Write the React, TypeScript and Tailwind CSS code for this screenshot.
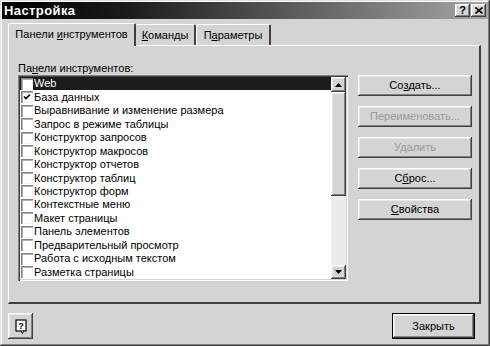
import React from "react";

const raised =
  "bg-[#d4d4d4] shadow-[inset_-1px_-1px_0_#404040,inset_1px_1px_0_#ffffff,inset_-2px_-2px_0_#808080,inset_2px_2px_0_#e8e8e8]";

const items = [
  "Web",
  "База данных",
  "Выравнивание и изменение размера",
  "Запрос в режиме таблицы",
  "Конструктор запросов",
  "Конструктор макросов",
  "Конструктор отчетов",
  "Конструктор таблиц",
  "Конструктор форм",
  "Контекстные меню",
  "Макет страницы",
  "Панель элементов",
  "Предварительный просмотр",
  "Работа с исходным текстом",
  "Разметка страницы",
];

function Check({ checked }: { checked: boolean }) {
  return (
    <div className="w-[12px] h-[12px] bg-white shrink-0 shadow-[inset_1px_1px_0_#808080,inset_2px_2px_0_#b0b0b0,inset_-1px_-1px_0_#f4f4f4] flex items-center justify-center">
      {checked && (
        <svg width="8" height="8" viewBox="0 0 8 8">
          <path d="M1 3.5 L3 5.5 L7 1.5" stroke="#000" strokeWidth="1.6" fill="none" />
        </svg>
      )}
    </div>
  );
}

function Btn({ children, disabled }: { children: React.ReactNode; disabled?: boolean }) {
  return (
    <div
      className={`${raised} h-[21px] w-[114px] flex items-center justify-center text-[11px] ${
        disabled ? "text-[#9a9a9a]" : "text-black"
      }`}
    >
      {children}
    </div>
  );
}

export default function App() {
  return (
    <div
      className="w-[490px] h-[346px] bg-[#d4d4d4] relative overflow-hidden shadow-[inset_-1px_-1px_0_#404040,inset_1px_1px_0_#e0e0e0,inset_-2px_-2px_0_#808080,inset_2px_2px_0_#ffffff] p-[2px] flex flex-col"
      style={{ fontFamily: '"Liberation Sans", Arial, sans-serif' }}
    >
      {/* Title bar */}
      <div className="h-[17px] bg-[linear-gradient(to_right,#000000,#1a1a1a_25%,#a6a6a6)] flex items-center pl-[2px] pr-[2px]">
        <span className="text-white font-bold text-[13px] leading-none tracking-[0.4px]">Настройка</span>
        <div className="ml-auto flex gap-0">
          <div className={`${raised} w-[15px] h-[13px] flex items-center justify-center text-[11px] font-bold leading-none`}>?</div>
          <div className={`${raised} w-[15px] h-[13px] flex items-center justify-center ml-[1px]`}>
            <svg width="8" height="7" viewBox="0 0 8 7">
              <path d="M0.5 0.5 L7.5 6.5 M7.5 0.5 L0.5 6.5" stroke="#000" strokeWidth="1.6" />
            </svg>
          </div>
        </div>
      </div>

      {/* Tabs */}
      <div className="flex items-end mt-[3px] ml-[6px] h-[23px] relative z-10 text-[11px]">
        <div className="h-[23px] w-[128px] bg-[#d4d4d4] border-l border-t border-white border-r-2 border-r-[#404040] rounded-t-[2px] flex items-center justify-center -mb-[1px] pb-[1px]">
          <span>
            Панели <span className="underline">и</span>нструментов
          </span>
        </div>
        <div className="h-[21px] w-[60px] border-t border-white border-r-2 border-r-[#404040] rounded-t-[2px] flex items-center justify-center">
          <span>
            <span className="underline">К</span>оманды
          </span>
        </div>
        <div className="h-[21px] w-[75px] border-t border-l border-white border-r-2 border-r-[#404040] rounded-t-[2px] flex items-center justify-center">
          <span>
            П<span className="underline">а</span>раметры
          </span>
        </div>
      </div>

      {/* Panel */}
      <div className="ml-[6px] w-[473px] h-[259px] border-t border-l border-white border-r-2 border-b-2 border-r-[#404040] border-b-[#404040] flex gap-[10px] pl-[9px] pt-[16px] text-[11px]">
        <div className="flex flex-col">
          <div className="leading-[12px] h-[12px] mb-[1px]">
            Па<span className="underline">н</span>ели инструментов:
          </div>
          <div className="w-[330px] h-[206px] bg-white shadow-[inset_1px_1px_0_#808080,inset_2px_2px_0_#404040,inset_-1px_-1px_0_#ffffff,inset_-2px_-2px_0_#d4d4d4] p-[2px] flex">
            <div className="flex-1 flex flex-col">
              {items.map((it, i) => (
                <div
                  key={it}
                  className={`h-[13.5px] flex items-center gap-[1px] pl-[1px] ${i === 0 ? "bg-[#1c1c1c] text-white" : "text-black"}`}
                >
                  <Check checked={i === 1} />
                  <span className="leading-none whitespace-nowrap">{it}</span>
                </div>
              ))}
            </div>
            {/* Scrollbar */}
            <div className="w-[15px] flex flex-col">
              <div className={`${raised} h-[15px] flex items-center justify-center`}>
                <svg width="7" height="4" viewBox="0 0 7 4">
                  <path d="M3.5 0 L7 4 L0 4 Z" fill="#000" />
                </svg>
              </div>
              <div className={`${raised} h-[104px]`} />
              <div className="flex-1 bg-[#ececec]" />
              <div className={`${raised} h-[14px] flex items-center justify-center`}>
                <svg width="7" height="4" viewBox="0 0 7 4">
                  <path d="M0 0 L7 0 L3.5 4 Z" fill="#000" />
                </svg>
              </div>
            </div>
          </div>
        </div>
        <div className="flex flex-col gap-[10px] pt-[13px]">
          <Btn>
            Со<span className="underline">з</span>дать...
          </Btn>
          <Btn disabled>Переименовать...</Btn>
          <Btn disabled>Удалить</Btn>
          <Btn>
            С<span className="underline">б</span>рос...
          </Btn>
          <Btn>
            <span className="underline">С</span>войства
          </Btn>
        </div>
      </div>

      {/* Bottom */}
      <div className="flex items-start mt-[9px] px-[6px]">
        <div className={`${raised} w-[25px] h-[26px] flex items-center justify-center`}>
          <svg width="12" height="15" viewBox="0 0 12 15">
            <rect x="1" y="1" width="10" height="11" fill="#fff" stroke="#000" strokeWidth="1.2" />
            <path d="M6 12 L7.5 14.5 L8.5 12" fill="#fff" stroke="#000" strokeWidth="1" />
            <text x="6" y="10" textAnchor="middle" fontSize="9" fontWeight="bold" fontFamily="Liberation Sans, Arial, sans-serif" fill="#000">?</text>
          </svg>
        </div>
        <div className="ml-auto mr-[7px] w-[83px] h-[26px] border border-black">
          <div className={`${raised} w-full h-full flex items-center justify-center text-[11px]`}>Закрыть</div>
        </div>
      </div>
    </div>
  );
}
